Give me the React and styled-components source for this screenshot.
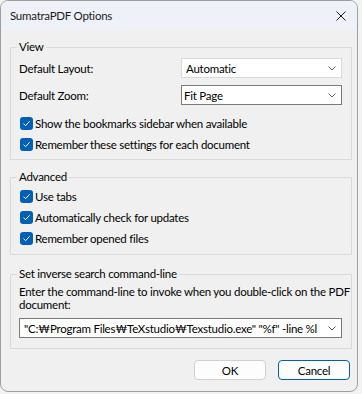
import React from "react";
import styled, { createGlobalStyle } from "styled-components";

const Global = createGlobalStyle`
  html, body {
    margin: 0;
    padding: 0;
    background: #f3f3f3;
  }
  body {
    font-family: Lato, "Liberation Sans", sans-serif;
    font-size: 11.5px;
    letter-spacing: -0.25px;
    color: #000;
  }
`;

const Window = styled.div`
  width: 358px;
  height: 392px;
  box-sizing: border-box;
  border: 1px solid #9e9e9e;
  border-radius: 8px;
  overflow: hidden;
  background: #f0f0f0;
  display: flex;
  flex-direction: column;
`;

const TitleBar = styled.div`
  height: 29px;
  background: #eef2f8;
  display: flex;
  align-items: center;
  justify-content: space-between;
  padding: 0 6px 0 9px;
  color: #1b1b1b;
`;

const Close = styled.svg`
  width: 10px;
  height: 10px;
  margin-right: 5px;
`;

const Body = styled.div`
  flex: 1;
  padding: 9px 5px 0 9px;
  display: flex;
  flex-direction: column;
`;

const Group = styled.fieldset`
  margin: ${(p) => p.$top || 0}px 0 0 0;
  padding: 0 9px ${(p) => p.$bottom || 5}px 8px;
  border: 1px solid #dadada;
  border-radius: 0;
  min-width: 0;
`;

const Legend = styled.legend`
  padding: 0 2px;
  margin-left: -2px;
  line-height: 16px;
  color: #000;
`;

const FieldRow = styled.div`
  display: flex;
  align-items: center;
  justify-content: space-between;
  margin-top: ${(p) => p.$top}px;
`;

const Select = styled.div`
  box-sizing: border-box;
  width: ${(p) => p.$width || 161}px;
  height: 20px;
  background: #fff;
  border: 1px solid ${(p) => (p.$active ? "#7a7a7a" : "#d9d9d9")};
  display: flex;
  align-items: center;
  justify-content: space-between;
  padding: 0 5px 0 ${(p) => p.$indent || 3}px;
  white-space: nowrap;
  overflow: hidden;
`;

const SelectText = styled.span`
  overflow: hidden;
  flex: 1;
`;

const Chevron = () => (
  <svg width="8" height="5" viewBox="0 0 8 5" style={{ flexShrink: 0, marginLeft: 4 }}>
    <path d="M0.5 0.5 L4 4 L7.5 0.5" fill="none" stroke="#606060" strokeWidth="1" />
  </svg>
);

const CheckRow = styled.div`
  display: flex;
  align-items: center;
  height: 21px;
  padding-left: 1px;
  margin-top: ${(p) => p.$top || 0}px;
`;

const Box = styled.span`
  width: 13px;
  height: 13px;
  border-radius: 3px;
  background: #005fb8;
  display: inline-flex;
  align-items: center;
  justify-content: center;
  margin-right: 2px;
`;

const Check = ({ children, top }) => (
  <CheckRow $top={top}>
    <Box>
      <svg width="9" height="9" viewBox="0 0 9 9">
        <path d="M1.5 4.6 L3.6 6.7 L7.6 2.3" fill="none" stroke="#fff" strokeWidth="1" />
      </svg>
    </Box>
    {children}
  </CheckRow>
);

const Para = styled.div`
  line-height: 13px;
  margin-top: 3px;
  white-space: nowrap;
`;

const Buttons = styled.div`
  display: flex;
  justify-content: flex-end;
  gap: 12px;
  margin-top: 11px;
  padding-right: 2px;
`;

const Button = styled.div`
  box-sizing: border-box;
  width: 72px;
  height: 20px;
  border-radius: 4px;
  background: #fdfdfd;
  border: 1px solid ${(p) => (p.$primary ? "#005fb8" : "#d0d0d0")};
  display: flex;
  align-items: center;
  justify-content: center;
`;

export default function App() {
  return (
    <>
      <Global />
      <Window>
        <TitleBar>
          <span>SumatraPDF Options</span>
          <Close viewBox="0 0 10 10">
            <path d="M0.5 0.5 L9.5 9.5 M9.5 0.5 L0.5 9.5" stroke="#1b1b1b" strokeWidth="1" />
          </Close>
        </TitleBar>
        <Body>
          <Group $bottom={4}>
            <Legend>View</Legend>
            <FieldRow $top={3}>
              <span>Default Layout:</span>
              <Select $indent={4}>
                <SelectText>Automatic</SelectText>
                <Chevron />
              </Select>
            </FieldRow>
            <FieldRow $top={7}>
              <span>Default Zoom:</span>
              <Select $active $indent={2}>
                <SelectText>Fit Page</SelectText>
                <Chevron />
              </Select>
            </FieldRow>
            <Check top={8}>Show the bookmarks sidebar when available</Check>
            <Check>Remember these settings for each document</Check>
          </Group>

          <Group $top={9} $bottom={5}>
            <Legend>Advanced</Legend>
            <Check top={1}>Use tabs</Check>
            <Check>Automatically check for updates</Check>
            <Check>Remember opened files</Check>
          </Group>

          <Group $top={11} $bottom={10}>
            <Legend>Set inverse search command-line</Legend>
            <Para>
              Enter the command-line to invoke when you double-click on the PDF
              <br />
              document:
            </Para>
            <FieldRow $top={7}>
              <Select $active $width={323} $indent={4}>
                <SelectText>"C:₩Program Files₩TeXstudio₩Texstudio.exe" "%f" -line %l</SelectText>
                <Chevron />
              </Select>
            </FieldRow>
          </Group>

          <Buttons>
            <Button>OK</Button>
            <Button $primary>Cancel</Button>
          </Buttons>
        </Body>
      </Window>
    </>
  );
}
